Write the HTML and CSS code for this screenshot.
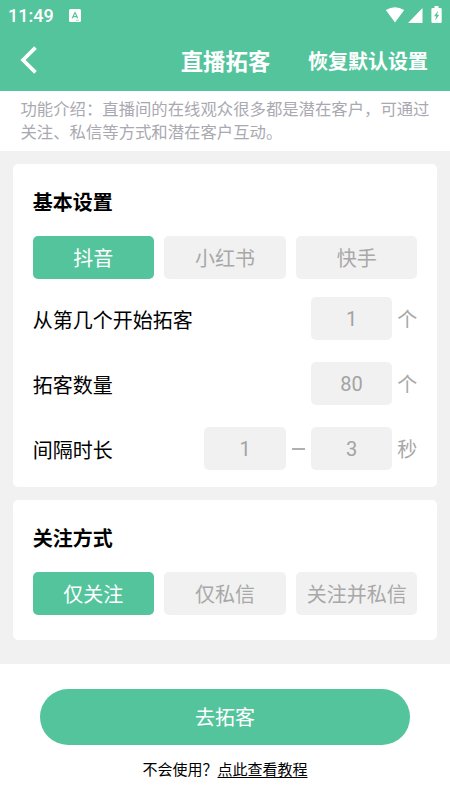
FILE: index.html
```html
<!DOCTYPE html>
<html lang="zh-CN">
<head>
<meta charset="utf-8">
<meta name="viewport" content="width=device-width">
<title>直播拓客</title>
<link rel="stylesheet" href="styles.css">
</head>
<body>
<header class="header">
  <div class="status">
    <span class="time">11:49</span>
    <svg class="app-icon" width="12" height="13" viewBox="0 0 12 13"><rect width="12" height="13" rx="1.5" fill="#fff"/><path d="M3.2 9.3 6 3.6 8.8 9.3M4.3 7.6h3.4" fill="none" stroke="#54c49d" stroke-width="1.2"/><path d="M7 11.3h3" stroke="#54c49d" stroke-width=".6"/></svg>
    <svg class="signals" width="57" height="18" viewBox="0 0 57 18" fill="#fff"><path d="M.8 4.1Q10 -1.5 19.2 4.1L10 16.6Z"/><path d="M37.5 2.1v14.8H23Z"/><path d="M49.5 0h4v2h2q1.2 0 1.2 1.2v12.6q0 1.2-1.2 1.2h-7.9q-1.2 0-1.2-1.2V3.2q0-1.2 1.2-1.2h1.9Z"/><path d="M53.3 4.5 49 10.3h2.2l-1.1 4.2 4.2-5.8H52Z" fill="#54c49d"/></svg>
  </div>
  <nav class="nav">
    <svg class="back" width="18" height="28" viewBox="0 0 18 28"><path d="M15.5 1.6 3 14 15.5 26.4" fill="none" stroke="#fff" stroke-width="3.7"/></svg>
    <h1 class="title">直播拓客</h1>
    <span class="reset">恢复默认设置</span>
  </nav>
</header>
<p class="intro">功能介绍：直播间的在线观众很多都是潜在客户，可通过<br>关注、私信等方式和潜在客户互动。</p>
<main class="settings">
  <section class="card">
    <h2 class="heading">基本设置</h2>
    <div class="options">
      <button class="option active">抖音</button>
      <button class="option">小红书</button>
      <button class="option">快手</button>
    </div>
    <div class="row"><span class="label">从第几个开始拓客</span><span class="field">1</span><span class="unit">个</span></div>
    <div class="row"><span class="label">拓客数量</span><span class="field">80</span><span class="unit">个</span></div>
    <div class="row"><span class="label">间隔时长</span><span class="field">1</span><span class="dash"></span><span class="field">3</span><span class="unit">秒</span></div>
  </section>
  <section class="card modes">
    <h2 class="heading">关注方式</h2>
    <div class="options">
      <button class="option active">仅关注</button>
      <button class="option">仅私信</button>
      <button class="option">关注并私信</button>
    </div>
  </section>
</main>
<footer class="footer">
  <button class="start">去拓客</button>
  <p class="help">不会使用？<a class="link">点此查看教程</a></p>
</footer>
</body>
</html>
```

FILE: styles.css
```css
* { box-sizing: border-box; }
body {
  margin: 0;
  width: 450px;
  height: 800px;
  overflow: hidden;
  background: #fff;
  color: #000;
  font-family: Roboto, "Noto Sans CJK SC", sans-serif;
}
h1, h2, p { margin: 0; }
button { border: 0; padding: 0; font-family: inherit; }
svg { display: block; flex: none; }
.header { height: 91px; background: #54c49d; color: #fff; }
.status { display: flex; align-items: center; height: 30px; padding: 0 8px; }
.time { width: 61px; font-size: 18px; font-weight: 500; line-height: 30px; padding-top: 1px; }
.signals { margin: 0 0 1px auto; }
.nav {
  display: grid;
  grid-template-columns: 1fr auto 1fr;
  align-items: center;
  height: 61px;
  padding: 0 22px 0 20px;
}
.back { margin-top: -1px; }
.title { padding: 2px 0 0 3px; font-size: 22.4px; line-height: 30px; font-weight: 700; }
.reset { justify-self: end; padding-top: 3px; font-size: 20px; line-height: 30px; font-weight: 700; white-space: nowrap; }
.intro {
  height: 60px;
  padding: 7px 0 0 20.5px;
  font-size: 16.37px;
  line-height: 23px;
  color: #a9a9b1;
  white-space: nowrap;
}
.settings { height: 513px; padding: 12.7px; background: #f1f1f1; }
.card { height: 323.5px; padding: 24px 20px 0; border-radius: 5px; background: #fff; }
.modes { height: 140.5px; margin-top: 12.5px; }
.heading { font-size: 20px; line-height: 30px; font-weight: 700; }
.options { display: grid; grid-template-columns: repeat(3, 1fr); gap: 10.3px; margin-top: 18.3px; }
.option {
  height: 43.5px;
  padding-top: 2px;
  border-radius: 5px;
  background: #f1f1f1;
  color: #a8a8a8;
  font-size: 20px;
  line-height: 43px;
}
.active { background: #54c49d; color: #fff; }
.row { display: flex; align-items: center; height: 43.7px; margin-top: 21.3px; }
.options + .row { margin-top: 17.3px; }
.label { flex: 1; font-size: 20px; line-height: 30px; padding-top: 4px; }
.field {
  width: 81.5px;
  height: 43.7px;
  border-radius: 5px;
  background: #f1f1f1;
  color: #a3a3a3;
  font-size: 20px;
  line-height: 45px;
  text-align: center;
}
.unit { margin-left: 5px; width: 20px; padding-top: 3px; font-size: 20px; line-height: 30px; color: #a8a8a8; }
.dash { width: 13px; height: 2px; margin: 0 6px; background: #b0b0b0; }
.footer { display: flex; flex-direction: column; align-items: center; padding-top: 25px; }
.start {
  width: 370px;
  height: 56px;
  padding-top: 2px;
  border-radius: 28px;
  background: #54c49d;
  color: #fff;
  font-size: 20px;
  line-height: 55px;
}
.help { margin-top: 14px; font-size: 15px; line-height: 23px; }
.link { text-decoration: underline; text-decoration-thickness: 1px; text-underline-offset: 2px; }
```
